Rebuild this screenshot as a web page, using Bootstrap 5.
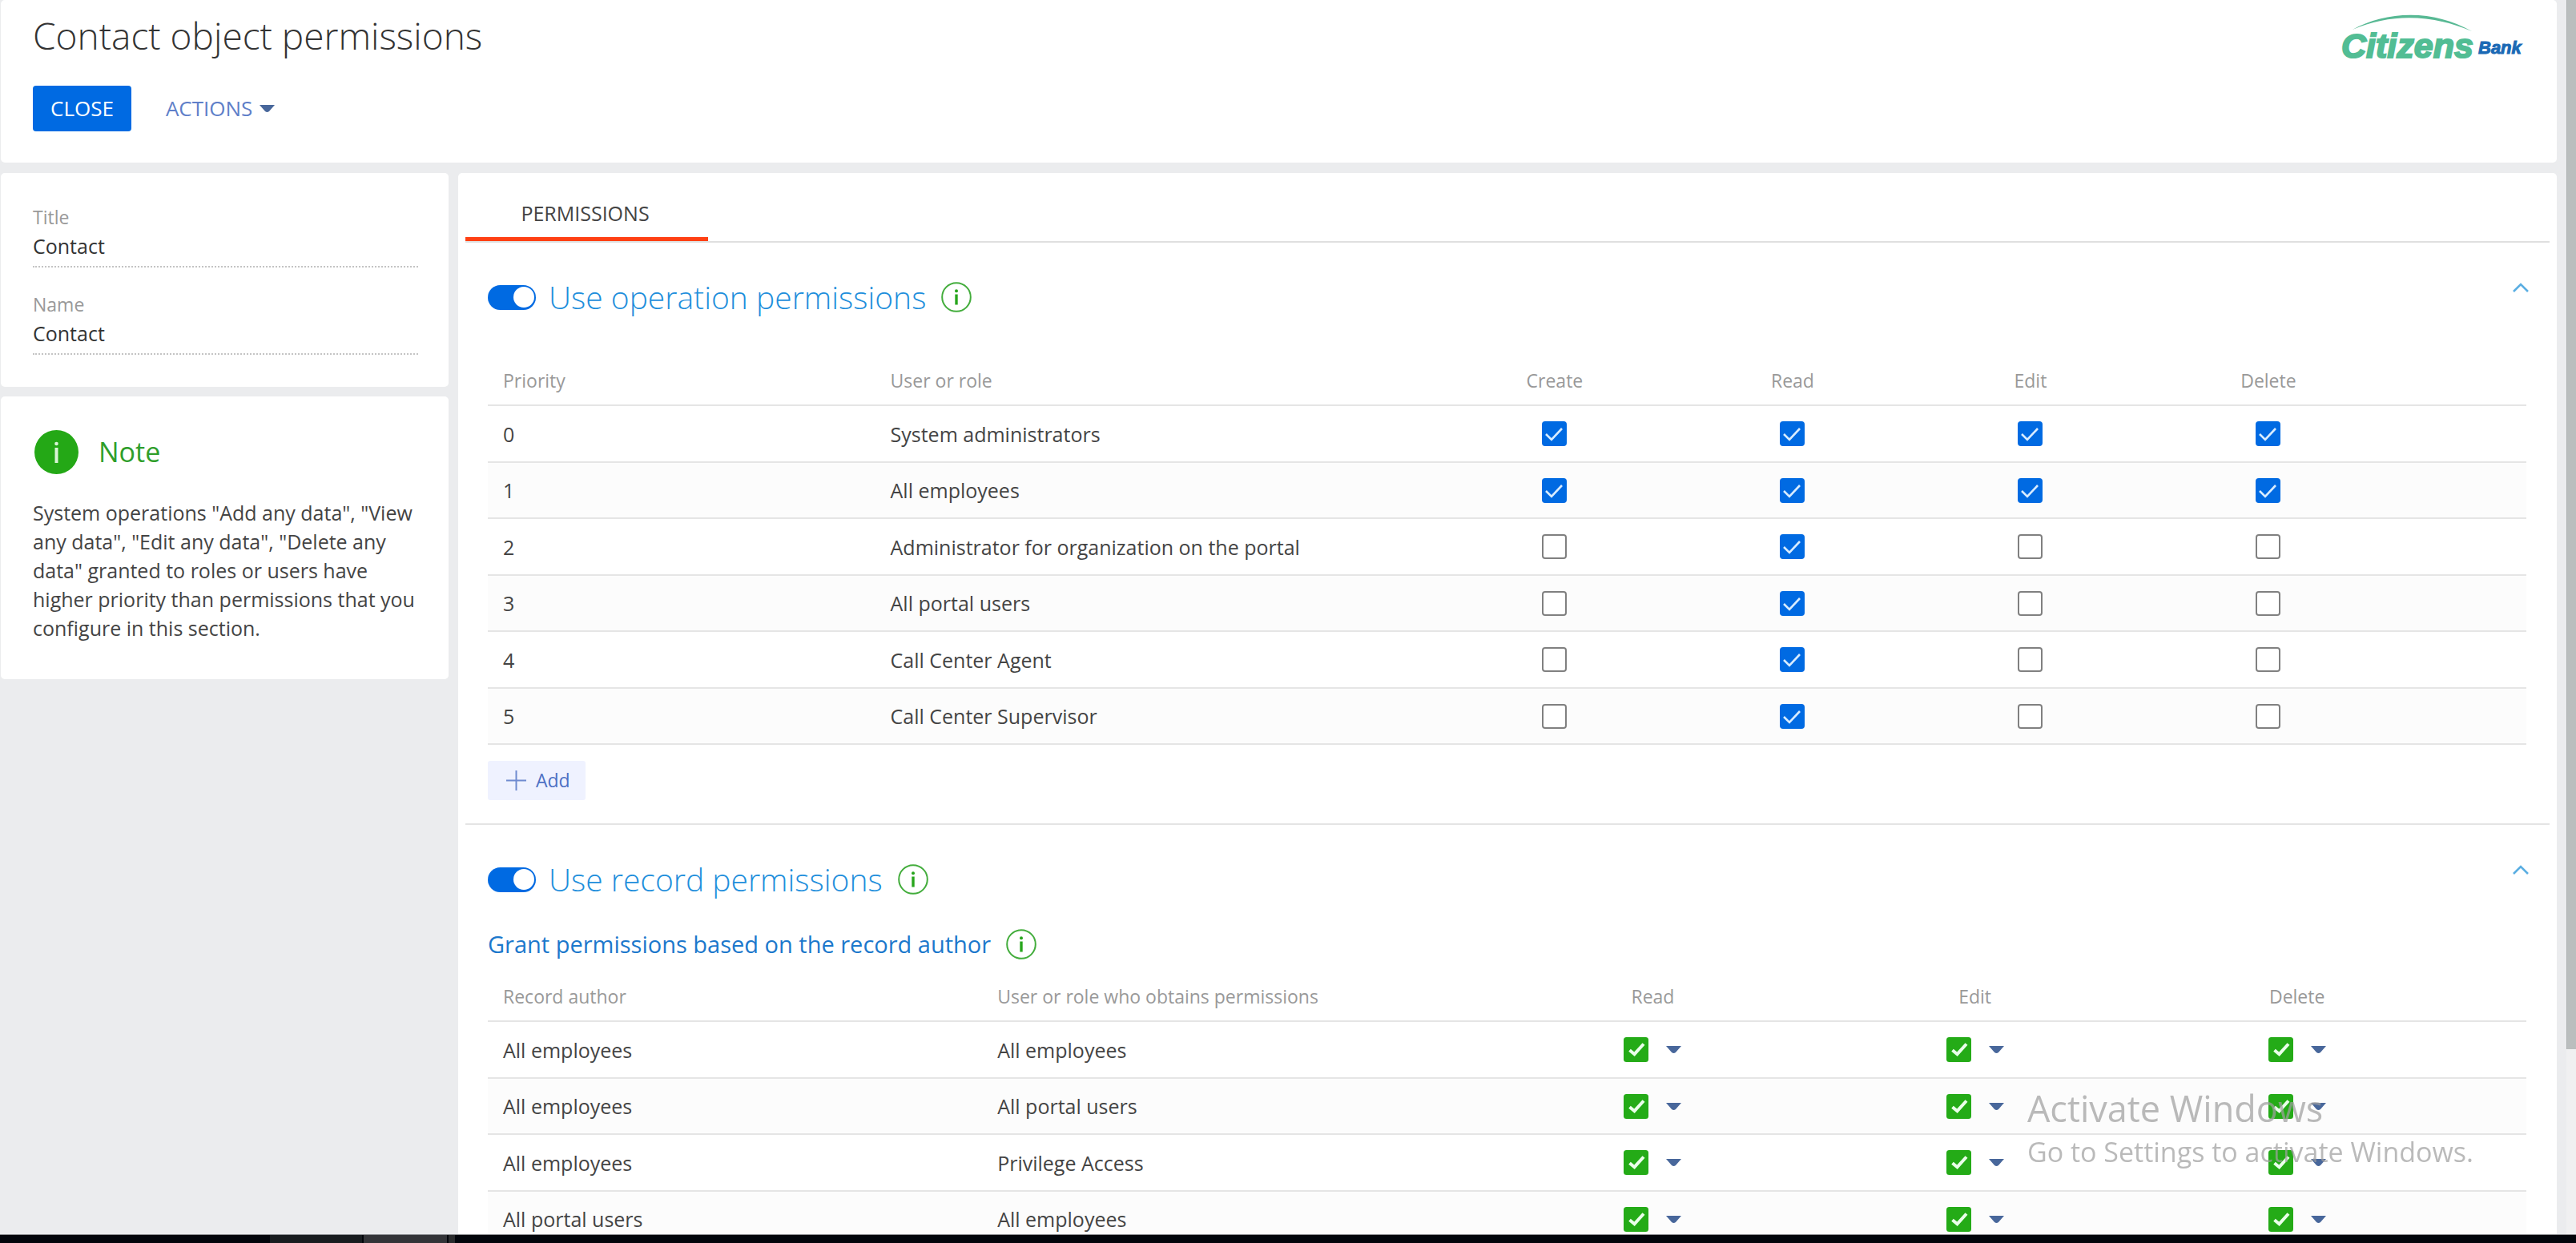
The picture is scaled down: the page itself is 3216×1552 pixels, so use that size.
<!DOCTYPE html>
<html lang="en">
<head>
<meta charset="utf-8">
<meta name="viewport" content="width=device-width, initial-scale=1">
<title>Contact object permissions</title>
<link href="https://cdn.jsdelivr.net/npm/bootstrap@5.3.0/dist/css/bootstrap.min.css" rel="stylesheet">
<style>
  body { font-family: "Open Sans", "Noto Sans", sans-serif; font-size: 25px; color: #444; background: #ebecee; }
  .panel { background: #fff; border-radius: 5px; }
  .page-area { min-width: 0; }
  .page-head { margin-left: 1px; margin-bottom: 13px; padding: 12px 42px 39px 40px; }
  .page-title { font-size: 46px; line-height: 64px; font-weight: 300; color: #333; }
  .head-actions { margin-top: 31px; gap: 43px; }
  .btn-close-page { height: 57px; padding: 0 22px; font-size: 26px; line-height: 57px; border: 0; border-radius: 4px; background: #006ae2; color: #fff; }
  .btn-actions { height: 57px; padding: 0; font-size: 26px; line-height: 57px; border: 0; color: #5f7fc9; }
  .tri { width: 19px; height: 9px; fill: #48679b; }
  .btn-actions .tri { margin-left: 9px; }
  .bank-logo { overflow: visible; }

  .side { width: 559px; gap: 12px; margin-left: 1px; }
  .side-fields { padding: 40px 38px 40px 40px; }
  .field + .field { margin-top: 31px; }
  .field label { display: block; font-size: 23px; line-height: 30px; color: #999; }
  .field input { height: 48px; padding: 0 0 4px; font-size: 25px; color: #333; background: none; border: 0; border-bottom: 2px dotted #c4c4c4; border-radius: 0; }
  .note-box { padding: 42px 38px 46px 40px; }
  .note-icon { width: 55px; height: 55px; margin-left: 2px; }
  .note-title { font-size: 34px; line-height: 55px; color: #2f9e2b; font-weight: 400; margin-left: 25px; }
  .note-text { margin-top: 30px; line-height: 36px; }

  .main-panel { margin-left: 12px; border-radius: 5px 5px 0 0; padding: 0 9px; }
  .tab-strip { border-bottom: 2px solid #e0e0e0; }
  .tab-strip .nav-link { width: 303px; height: 85px; padding: 32px 4px 0 0; font-size: 25px; line-height: 36px; text-align: center; color: #444; border-bottom: 5px solid #ff4013; border-radius: 0; }
  .perm-section { padding: 41px 29px 29px 28px; }
  .perm-section + .perm-section { border-top: 2px solid #e4e4e4; }
  .section-head { height: 54px; }
  .switch-box.form-check-input { width: 60px; height: 31px; margin: 0; border: 0; box-shadow: none; background-color: #006ae2;
    background-image: url("data:image/svg+xml,%3csvg xmlns='http://www.w3.org/2000/svg' viewBox='0 0 60 31'%3e%3ccircle cx='45' cy='15' r='13' fill='%23fff'/%3e%3c/svg%3e"); background-size: 60px 31px; background-position: center; }
  .section-title { font-size: 39px; line-height: 54px; font-weight: 300; color: #1f8fdc; margin-left: 16px; }
  .info-btn { width: 38px; height: 38px; margin-left: 19px; padding: 0; border: 0; background: none; line-height: 0; }
  .info-btn svg { width: 38px; height: 38px; }
  .fold-btn { padding: 0; border: 0; background: none; line-height: 0; margin-top: 8px; margin-right: -3px; }
  .fold-btn svg { width: 20px; height: 13px; }
  .sub-head { margin-top: 34px; height: 40px; }
  .sub-title { font-size: 29px; line-height: 40px; font-weight: 400; color: #1c78cc; }

  .perm-table { table-layout: fixed; width: 100%; border-collapse: separate; border-spacing: 0; }
  .perm-table th { height: 62px; font-size: 23px; font-weight: 400; color: #999; }
  .perm-table td { height: 71px; line-height: 34px; }
  .perm-table tr:nth-child(even) td { height: 70px; background: #fcfcfc; }
  .perm-table th, .perm-table td { padding: 0 19px; border-bottom: 2px solid #e5e5e5; vertical-align: middle; }
  .perm-table .tick { text-align: center; line-height: 0; padding: 0; }
  .perm-table th.tick { line-height: 34px; }
  .op-table { margin-top: 47px; }
  .rec-table { margin-top: 15px; }
  .col-priority { width: 19%; }
  .col-role { width: 27.5%; }
  .col-op { width: 11.67%; }
  .col-author { width: 24.25%; }
  .col-grantee { width: 25%; }
  .col-grant { width: 15.8%; }
  .tick-box.form-check-input { width: 31px; height: 31px; margin: 0; border: 2px solid #808080; border-radius: 4px; background-color: #fff; }
  .tick-box.form-check-input:checked { border-color: #006ae2; background-color: #006ae2;
    background-image: url("data:image/svg+xml,%3csvg xmlns='http://www.w3.org/2000/svg' viewBox='0 0 27 27'%3e%3cpath fill='none' stroke='%23d8ecff' stroke-width='2.6' d='M3 14l7 7L23 7'/%3e%3c/svg%3e"); background-size: 27px 27px; }
  .grant-btn { gap: 22px; padding: 0; border: 0; background: none; }
  .grant-btn .ok { width: 31px; height: 31px; }
  .add-btn { margin-top: 20px; height: 49px; padding: 0 19px 0 23px; gap: 12px; font-size: 23px; border: 0; border-radius: 3px; background: #eff2ff; color: #4d70c4; }
  .add-btn svg { width: 25px; height: 25px; }

  .scroll-gutter { width: 12px; }
  .scroll-track { width: 12px; background: #f0f0f1; }
  .scroll-thumb { height: 85%; background: #babebe; border-left: 1px solid #adb1b1; }
  .taskbar { height: 11px; background: #02050b; border-top: 1px solid #8a8c90; padding-left: 337px; gap: 2px; }
  .task-a { width: 115px; background: #181c1f; }
  .task-b { width: 104px; background: #333438; }
  .task-c { width: 8px; background: #2a2b2d; }
  .os-notice { right: 128px; bottom: 90px; color: rgba(160, 160, 160, .72); pointer-events: none; }
  .os-notice-title { font-size: 45px; line-height: 60px; }
  .os-notice-text { font-size: 34px; line-height: 48px; }
</style>
</head>
<body class="vh-100 d-flex flex-column overflow-hidden">

<svg width="0" height="0" class="position-absolute" aria-hidden="true">
  <symbol id="i-info" viewBox="0 0 38 38"><circle cx="19" cy="19" r="17.8" fill="none" stroke="#43ad3c" stroke-width="2"/><circle cx="19" cy="11.3" r="2" fill="#27a51c"/><path d="M19 15.5v13" stroke="#27a51c" stroke-width="3.4"/></symbol>
  <symbol id="i-tri" viewBox="0 0 19 9"><path d="M0 0h19l-7 8q-2.5 2-5 0z"/></symbol>
  <symbol id="i-up" viewBox="0 0 20 13"><path d="M1 12l9-9 9 9" fill="none" stroke="#5aaee2" stroke-width="2.6"/></symbol>
  <symbol id="i-ok" viewBox="0 0 31 31"><rect width="31" height="31" rx="3.5" fill="#24ab17"/><path d="M7.5 16.2l6 5L25 8.5" fill="none" stroke="#eaffea" stroke-width="4"/></symbol>
</svg>

<div class="d-flex flex-grow-1 overflow-hidden">
  <div class="page-area flex-grow-1 d-flex flex-column overflow-hidden">
    <header class="panel page-head d-flex justify-content-between align-items-start flex-shrink-0">
      <div>
        <h1 class="page-title mb-0">Contact object permissions</h1>
        <div class="head-actions d-flex align-items-center">
          <button type="button" class="btn btn-close-page">CLOSE</button>
          <button type="button" class="btn btn-actions d-flex align-items-center">ACTIONS <svg class="tri" aria-hidden="true"><use href="#i-tri"/></svg></button>
        </div>
      </div>
      <svg class="bank-logo" width="226" height="66" viewBox="0 0 226 66" role="img" aria-label="Citizens Bank">
        <path d="M13 25C55 2 112-1 162 27C112 6 62 4 13 25z" fill="#58b994"/>
        <text x="-1" y="60" font-family="Liberation Sans, sans-serif" font-size="43" font-weight="700" font-style="italic" fill="#52bd94" stroke="#52bd94" stroke-width="2">Citizens</text>
        <text x="170" y="55" font-family="Liberation Sans, sans-serif" font-size="22" font-weight="700" font-style="italic" fill="#1a69b5" stroke="#1a69b5" stroke-width="1">Bank</text>
      </svg>
    </header>

    <div class="d-flex flex-grow-1 overflow-hidden">
      <aside class="side d-flex flex-column flex-shrink-0">
        <section class="panel side-fields">
          <div class="field"><label for="f-title">Title</label><input id="f-title" class="form-control" type="text" value="Contact"></div>
          <div class="field"><label for="f-name">Name</label><input id="f-name" class="form-control" type="text" value="Contact"></div>
        </section>
        <section class="panel note-box">
          <div class="d-flex align-items-center">
            <svg class="note-icon" viewBox="0 0 55 55" aria-hidden="true"><circle cx="27.5" cy="27.5" r="27.5" fill="#24a816"/><circle cx="27.5" cy="17" r="2.3" fill="#d9f5d6"/><path d="M27.5 22v19" stroke="#d9f5d6" stroke-width="4"/></svg>
            <h2 class="note-title mb-0">Note</h2>
          </div>
          <p class="note-text mb-0">System operations "Add any data", "View any data", "Edit any data", "Delete any data" granted to roles or users have higher priority than permissions that you configure in this section.</p>
        </section>
      </aside>

      <main class="panel main-panel flex-grow-1">
        <nav class="nav tab-strip"><a class="nav-link active" href="#permissions">PERMISSIONS</a></nav>

        <section class="perm-section" id="permissions">
          <div class="section-head d-flex align-items-center">
            <input class="form-check-input switch-box rounded-pill" type="checkbox" role="switch" id="sw-op" checked>
            <label class="section-title" for="sw-op">Use operation permissions</label>
            <button type="button" class="info-btn" aria-label="About operation permissions"><svg><use href="#i-info"/></svg></button>
            <button type="button" class="fold-btn ms-auto align-self-start" aria-label="Collapse"><svg><use href="#i-up"/></svg></button>
          </div>
          <table class="perm-table op-table">
            <colgroup><col class="col-priority"><col class="col-role"><col class="col-op" span="4"><col></colgroup>
            <thead><tr><th>Priority</th><th>User or role</th><th class="tick">Create</th><th class="tick">Read</th><th class="tick">Edit</th><th class="tick">Delete</th><th></th></tr></thead>
            <tbody id="op-rows"></tbody>
          </table>
          <button type="button" class="btn add-btn d-flex align-items-center"><svg viewBox="0 0 25 25" aria-hidden="true"><path d="M12.5 0v25M0 12.5h25" stroke="#6f8bd0" stroke-width="2"/></svg>Add</button>
        </section>

        <section class="perm-section">
          <div class="section-head d-flex align-items-center">
            <input class="form-check-input switch-box rounded-pill" type="checkbox" role="switch" id="sw-rec" checked>
            <label class="section-title" for="sw-rec">Use record permissions</label>
            <button type="button" class="info-btn" aria-label="About record permissions"><svg><use href="#i-info"/></svg></button>
            <button type="button" class="fold-btn ms-auto align-self-start" aria-label="Collapse"><svg><use href="#i-up"/></svg></button>
          </div>
          <div class="sub-head d-flex align-items-center">
            <h3 class="sub-title mb-0">Grant permissions based on the record author</h3>
            <button type="button" class="info-btn" aria-label="About record author"><svg><use href="#i-info"/></svg></button>
          </div>
          <table class="perm-table rec-table">
            <colgroup><col class="col-author"><col class="col-grantee"><col class="col-grant" span="3"><col></colgroup>
            <thead><tr><th>Record author</th><th>User or role who obtains permissions</th><th class="tick">Read</th><th class="tick">Edit</th><th class="tick">Delete</th><th></th></tr></thead>
            <tbody id="rec-rows"></tbody>
          </table>
        </section>
      </main>
    </div>
  </div>
  <div class="scroll-gutter flex-shrink-0"></div>
  <div class="scroll-track flex-shrink-0"><div class="scroll-thumb"></div></div>
</div>

<footer class="taskbar d-flex flex-shrink-0"><div class="task-a"></div><div class="task-b"></div><div class="task-c"></div></footer>

<div class="os-notice position-fixed">
  <div class="os-notice-title">Activate Windows</div>
  <div class="os-notice-text">Go to Settings to activate Windows.</div>
</div>

<script src="https://cdn.jsdelivr.net/npm/bootstrap@5.3.0/dist/js/bootstrap.bundle.min.js"></script>
<script>
  const ops = ['Create', 'Read', 'Edit', 'Delete'];
  const opRows = [
    ['System administrators', '1111'], ['All employees', '1111'],
    ['Administrator for organization on the portal', '0100'], ['All portal users', '0100'],
    ['Call Center Agent', '0100'], ['Call Center Supervisor', '0100']
  ];
  document.getElementById('op-rows').innerHTML = opRows.map(([role, flags], i) =>
    `<tr><td>${i}</td><td>${role}</td>` + ops.map((op, k) =>
      `<td class="tick"><input class="form-check-input tick-box" type="checkbox" aria-label="${op}: ${role}"${flags[k] === '1' ? ' checked' : ''}></td>`
    ).join('') + '<td></td></tr>').join('');

  const recRows = [
    ['All employees', 'All employees'], ['All employees', 'All portal users'],
    ['All employees', 'Privilege Access'], ['All portal users', 'All employees']
  ];
  document.getElementById('rec-rows').innerHTML = recRows.map(([author, role]) =>
    `<tr><td>${author}</td><td>${role}</td>` + ops.slice(1).map(op =>
      `<td class="tick"><button type="button" class="grant-btn d-inline-flex align-items-center" aria-label="${op}: granted"><svg class="ok"><use href="#i-ok"/></svg><svg class="tri"><use href="#i-tri"/></svg></button></td>`
    ).join('') + '<td></td></tr>').join('');
</script>
</body>
</html>
